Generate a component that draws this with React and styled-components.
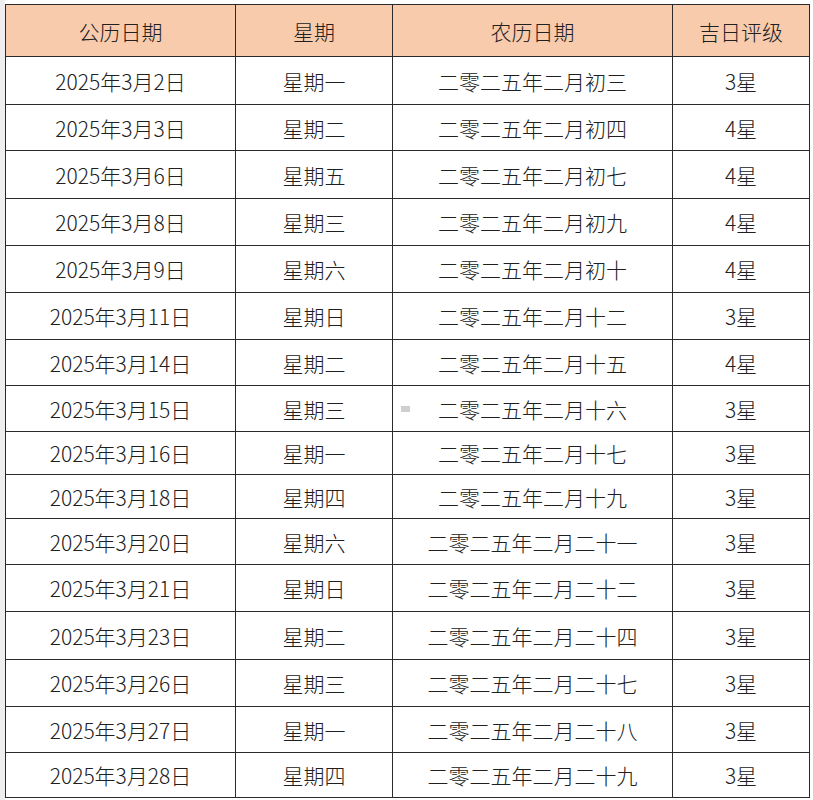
import React from 'react';
import styled, { createGlobalStyle } from 'styled-components';

const GlobalStyle = createGlobalStyle`
  html, body {
    margin: 0;
    padding: 0;
    background: #ffffff;
  }
  body {
    font-family: "Noto Sans CJK SC", "Liberation Sans", sans-serif;
  }
`;

const Page = styled.div`
  display: flex;
  width: 813px;
  height: 800px;
  background: #ffffff;
`;

const Gutter = styled.div`
  width: 5px;
  flex: none;
  background: #eeeeee;
`;

const Sheet = styled.div`
  padding-top: 4px;
`;

const Table = styled.table`
  border-collapse: collapse;
  table-layout: fixed;
  width: 804px;
  color: #202020;
  font-size: 21px;
  font-weight: 300;
`;

const Col = styled.col`
  width: ${p => p.w}px;
`;

const HeadRow = styled.tr`
  height: 52px;
  background: #f8cbad;
`;

const HeadCell = styled.th`
  border: 1px solid #2a2a2a;
  font-weight: 300;
  text-align: center;
  padding: 0;
`;

const Row = styled.tr`
  height: ${p => p.h}px;
`;

const Cell = styled.td`
  position: relative;
  border: 1px solid #2a2a2a;
  text-align: center;
  padding: 0;
  white-space: nowrap;
`;

const Marker = styled.span`
  position: absolute;
  left: 8px;
  top: 50%;
  transform: translateY(-50%);
  display: flex;
  flex-direction: column;
  gap: 1px;
  & > i {
    display: block;
    width: 9px;
    height: 1px;
    background: #a0a0a0;
  }
`;

const rows = [
  ['2025年3月2日', '星期一', '二零二五年二月初三', '3星', 48],
  ['2025年3月3日', '星期二', '二零二五年二月初四', '4星', 46],
  ['2025年3月6日', '星期五', '二零二五年二月初七', '4星', 48],
  ['2025年3月8日', '星期三', '二零二五年二月初九', '4星', 47],
  ['2025年3月9日', '星期六', '二零二五年二月初十', '4星', 47],
  ['2025年3月11日', '星期日', '二零二五年二月十二', '3星', 47],
  ['2025年3月14日', '星期二', '二零二五年二月十五', '4星', 46],
  ['2025年3月15日', '星期三', '二零二五年二月十六', '3星', 46, true],
  ['2025年3月16日', '星期一', '二零二五年二月十七', '3星', 43],
  ['2025年3月18日', '星期四', '二零二五年二月十九', '3星', 44],
  ['2025年3月20日', '星期六', '二零二五年二月二十一', '3星', 46],
  ['2025年3月21日', '星期日', '二零二五年二月二十二', '3星', 47],
  ['2025年3月23日', '星期二', '二零二五年二月二十四', '3星', 48],
  ['2025年3月26日', '星期三', '二零二五年二月二十七', '3星', 47],
  ['2025年3月27日', '星期一', '二零二五年二月二十八', '3星', 46],
  ['2025年3月28日', '星期四', '二零二五年二月二十九', '3星', 45],
];

export default function App() {
  return (
    <>
      <GlobalStyle />
      <Page>
        <Gutter />
        <Sheet>
          <Table>
            <colgroup>
              <Col w={230} />
              <Col w={157} />
              <Col w={280} />
              <Col w={137} />
            </colgroup>
            <thead>
              <HeadRow>
                <HeadCell>公历日期</HeadCell>
                <HeadCell>星期</HeadCell>
                <HeadCell>农历日期</HeadCell>
                <HeadCell>吉日评级</HeadCell>
              </HeadRow>
            </thead>
            <tbody>
              {rows.map(([date, week, lunar, stars, h, mark]) => (
                <Row key={date} h={h}>
                  <Cell>{date}</Cell>
                  <Cell>{week}</Cell>
                  <Cell>
                    {mark && (
                      <Marker>
                        <i />
                        <i />
                        <i />
                      </Marker>
                    )}
                    {lunar}
                  </Cell>
                  <Cell>{stars}</Cell>
                </Row>
              ))}
            </tbody>
          </Table>
        </Sheet>
      </Page>
    </>
  );
}
